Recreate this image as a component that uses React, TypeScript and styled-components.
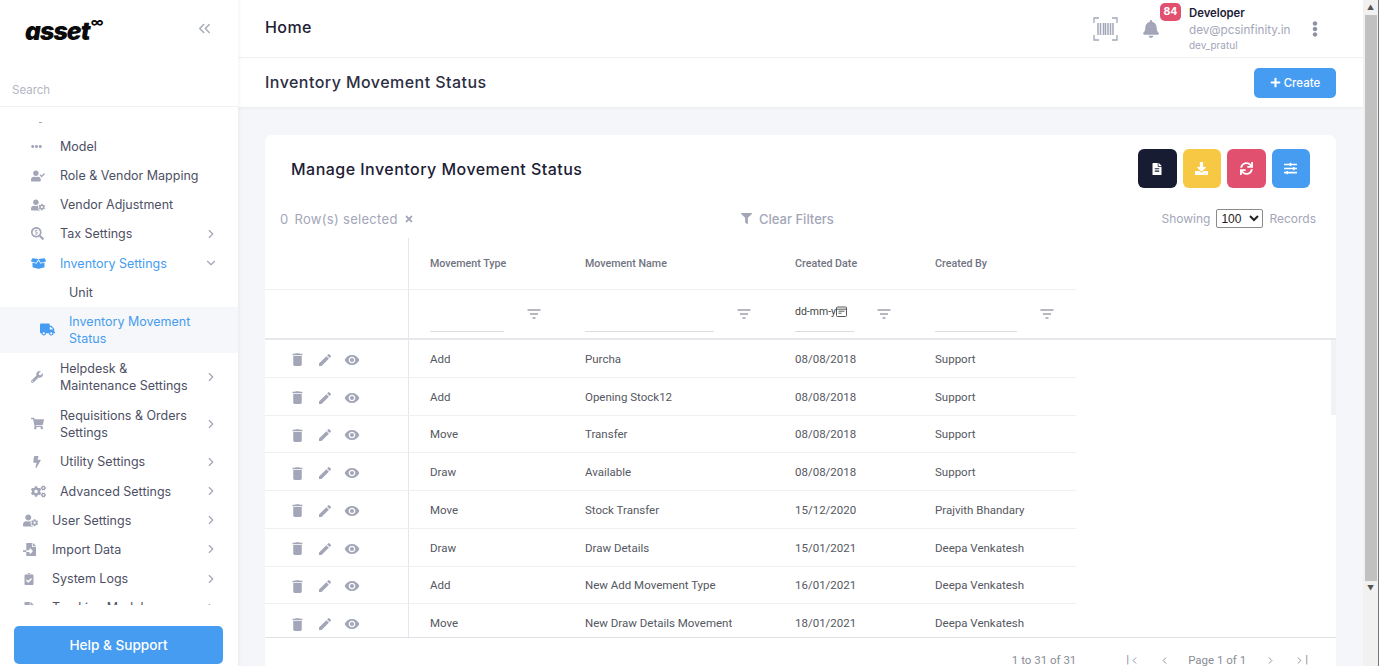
//libraries imports
import { FC, ReactNode } from "react";
import styled, { createGlobalStyle } from "styled-components";
import {
  FaBell,
  FaBolt,
  FaCogs,
  FaFileAlt,
  FaFileImport,
  FaFilter,
  FaShoppingCart,
  FaSlidersH,
  FaSync,
  FaTimes,
  FaTruck,
  FaUserCheck,
  FaUserCog,
  FaWrench,
  FaBoxOpen,
  FaClipboardCheck,
  FaSearchDollar,
  FaDownload,
  FaEllipsisH,
  FaEllipsisV,
  FaPlus,
} from "react-icons/fa";
import { MdDelete, MdEdit, MdVisibility } from "react-icons/md";
import { LuChevronRight, LuChevronDown, LuChevronLeft, LuChevronsLeft } from "react-icons/lu";

//types
type NavItem = {
  label: ReactNode;
  icon: ReactNode;
  level?: number;
  arrow?: "right" | "down";
  active?: boolean;
  tall?: boolean;
};

//data
const navItems: NavItem[] = [
  { label: "Model", icon: <FaEllipsisH size={11} />, level: 1 },
  { label: "Role & Vendor Mapping", icon: <FaUserCheck size={14} />, level: 1 },
  { label: "Vendor Adjustment", icon: <FaUserCog size={14} />, level: 1 },
  { label: "Tax Settings", icon: <FaSearchDollar size={13} />, level: 1, arrow: "right" },
  { label: "Inventory Settings", icon: <FaBoxOpen size={15} />, level: 1, arrow: "down", active: true },
];

const navItemsAfter: NavItem[] = [
  { label: <>Helpdesk &amp;<br />Maintenance Settings</>, icon: <FaWrench size={12} />, level: 1, arrow: "right", tall: true },
  { label: <>Requisitions &amp; Orders<br />Settings</>, icon: <FaShoppingCart size={13} />, level: 1, arrow: "right", tall: true },
  { label: "Utility Settings", icon: <FaBolt size={12} />, level: 1, arrow: "right" },
  { label: "Advanced Settings", icon: <FaCogs size={15} />, level: 1, arrow: "right" },
  { label: "User Settings", icon: <FaUserCog size={15} />, level: 0, arrow: "right" },
  { label: "Import Data", icon: <FaFileImport size={13} />, level: 0, arrow: "right" },
  { label: "System Logs", icon: <FaClipboardCheck size={12} />, level: 0, arrow: "right" },
  { label: "Tracking Module", icon: <FaFileAlt size={12} />, level: 0, arrow: "right" },
];

const rows = [
  ["Add", "Purcha", "08/08/2018", "Support"],
  ["Add", "Opening Stock12", "08/08/2018", "Support"],
  ["Move", "Transfer", "08/08/2018", "Support"],
  ["Draw", "Available", "08/08/2018", "Support"],
  ["Move", "Stock Transfer", "15/12/2020", "Prajvith Bhandary"],
  ["Draw", "Draw Details", "15/01/2021", "Deepa Venkatesh"],
  ["Add", "New Add Movement Type", "16/01/2021", "Deepa Venkatesh"],
  ["Move", "New Draw Details Movement", "18/01/2021", "Deepa Venkatesh"],
];

const columns = [
  { title: "Movement Type", width: 155, input: 74 },
  { title: "Movement Name", width: 210, input: 129 },
  { title: "Created Date", width: 140, input: 59 },
  { title: "Created By", width: 142, input: 82 },
];

const FilterLines: FC = () => (
  <svg width="14" height="10" viewBox="0 0 14 10" fill="none" stroke="#6f7280" strokeWidth="1">
    <path d="M0.5 1h13M3 5h8M5.5 9h3" />
  </svg>
);

const BarcodeIcon: FC = () => (
  <svg width="25" height="24" viewBox="0 0 25 24" fill="none" stroke="#a3a6b8" strokeWidth="1.3">
    <path d="M6 1H1v5M19 1h5v5M6 23H1v-5M19 23h5v-5" />
    <path d="M5 6v12M7.5 6v12M10.5 6v12M12.5 6v12M15 6v12M17.5 6v12M20 6v12" strokeWidth="1.5" />
  </svg>
);

const CalendarGlyph: FC = () => (
  <svg width="11" height="11" viewBox="0 0 11 11" fill="none" stroke="#444" strokeWidth="0.9">
    <rect x="0.5" y="1" width="10" height="9.5" rx="1" />
    <path d="M0.5 3.2h10M2.5 5.2h6M2.5 7.2h3" />
  </svg>
);

const NavRow: FC<NavItem> = ({ label, icon, level = 0, arrow, active, tall }) => (
  <NavLine $level={level} $active={active} $tall={tall}>
    <NavIcon $active={active}>{icon}</NavIcon>
    <NavText>{label}</NavText>
    {arrow === "right" && <NavArrow><LuChevronRight size={14} /></NavArrow>}
    {arrow === "down" && <NavArrow><LuChevronDown size={14} /></NavArrow>}
  </NavLine>
);

const App: FC = () => {
  return (
    <>
      <GlobalStyle />
      <Page>
        <Sidebar>
          <LogoRow>
            <Logo>
              asset<sup>∞</sup>
            </Logo>
            <Collapse>
              <LuChevronsLeft size={19} />
            </Collapse>
          </LogoRow>
          <SearchRow>Search</SearchRow>
          <NavScroll>
            <NavStub />
            {navItems.map((item, i) => (
              <NavRow key={i} {...item} />
            ))}
            <SubLine>Unit</SubLine>
            <ActiveLine>
              <ActiveIcon>
                <FaTruck size={15} />
              </ActiveIcon>
              <span>
                Inventory Movement
                <br />
                Status
              </span>
            </ActiveLine>
            {navItemsAfter.map((item, i) => (
              <NavRow key={i} {...item} />
            ))}
          </NavScroll>
          <HelpWrap>
            <HelpButton>Help &amp; Support</HelpButton>
          </HelpWrap>
        </Sidebar>

        <Main>
          <TopBar>
            <PageTitle>Home</PageTitle>
            <TopActions>
              <BarcodeIcon />
              <BellWrap>
                <FaBell size={18} />
                <Badge>84</Badge>
              </BellWrap>
              <UserBlock>
                <UserName>Developer</UserName>
                <UserMail>dev@pcsinfinity.in</UserMail>
                <UserId>dev_pratul</UserId>
              </UserBlock>
              <MoreButton>
                <FaEllipsisV size={16} />
              </MoreButton>
            </TopActions>
          </TopBar>
          <SubBar>
            <SubTitle>Inventory Movement Status</SubTitle>
            <CreateButton>
              <FaPlus size={11} /> Create
            </CreateButton>
          </SubBar>

          <Content>
            <Card>
              <CardHead>
                <CardTitle>Manage Inventory Movement Status</CardTitle>
                <ToolButtons>
                  <ToolButton $color="#171c33"><FaFileAlt size={12} /></ToolButton>
                  <ToolButton $color="#f6c844"><FaDownload size={13} /></ToolButton>
                  <ToolButton $color="#e2506f"><FaSync size={13} /></ToolButton>
                  <ToolButton $color="#469cf0"><FaSlidersH size={13} /></ToolButton>
                </ToolButtons>
              </CardHead>

              <InfoRow>
                <Selected>
                  <b>0</b> Row(s) selected <FaTimes size={10} />
                </Selected>
                <ClearFilters>
                  <FaFilter size={11} /> Clear Filters
                </ClearFilters>
                <Showing>
                  Showing
                  <RecordSelect defaultValue="100">
                    <option value="100">100</option>
                  </RecordSelect>
                  Records
                </Showing>
              </InfoRow>

              <Grid>
                <GridBody>
                  <HeadRow>
                    <ActionCell />
                    {columns.map((c) => (
                      <HeadCell key={c.title} style={{ width: c.width }}>
                        {c.title}
                      </HeadCell>
                    ))}
                  </HeadRow>
                  <FilterRow>
                    <ActionCell />
                    {columns.map((c) => (
                      <FilterCell key={c.title} style={{ width: c.width }}>
                        <FilterInput style={{ width: c.input }}>
                          {c.title === "Created Date" && (
                            <DateHint>
                              dd-mm-y
                              <CalendarGlyph />
                            </DateHint>
                          )}
                        </FilterInput>
                        <FilterGlyph>
                          <FilterLines />
                        </FilterGlyph>
                      </FilterCell>
                    ))}
                  </FilterRow>
                  {rows.map((r, i) => (
                    <DataRow key={i}>
                      <ActionCell>
                        <ActionIcon><MdDelete size={17} /></ActionIcon>
                        <ActionIcon><MdEdit size={16} /></ActionIcon>
                        <ActionIcon><MdVisibility size={16} /></ActionIcon>
                      </ActionCell>
                      {r.map((v, j) => (
                        <DataCell key={j} style={{ width: columns[j].width }}>
                          {v}
                        </DataCell>
                      ))}
                    </DataRow>
                  ))}
                </GridBody>
                <GridThumb />
              </Grid>

              <Pager>
                <span>1 to 31 of 31</span>
                <PagerNav>
                  <PagerIcon>|<LuChevronLeft size={11} /></PagerIcon>
                  <PagerIcon><LuChevronLeft size={11} /></PagerIcon>
                  <span>Page 1 of 1</span>
                  <PagerIcon><LuChevronRight size={11} /></PagerIcon>
                  <PagerIcon><LuChevronRight size={11} />|</PagerIcon>
                </PagerNav>
              </Pager>
            </Card>
          </Content>
        </Main>

        <PageScroll>
          <ScrollArrow>▲</ScrollArrow>
          <ScrollThumb />
          <ScrollArrow>▼</ScrollArrow>
        </PageScroll>
      </Page>
    </>
  );
};

const GlobalStyle = createGlobalStyle`
  html, body {
    margin: 0;
    height: 666px;
    overflow: hidden;
    font-family: "Inter", "Liberation Sans", sans-serif;
    background: #f4f6f9;
  }
  * { box-sizing: border-box; }
`;

const Page = styled.div`
  display: flex;
  width: 1379px;
  height: 666px;
  overflow: hidden;
`;

const Sidebar = styled.aside`
  width: 238px;
  flex: none;
  display: flex;
  flex-direction: column;
  background: #fff;
  box-shadow: 1px 0 4px rgba(30, 40, 70, 0.06);
  z-index: 2;
`;

const LogoRow = styled.div`
  height: 57px;
  padding: 0 24px 0 25px;
  display: flex;
  align-items: center;
  justify-content: space-between;
`;

const Logo = styled.div`
  font-family: "Inter", sans-serif;
  font-weight: 900;
  font-style: italic;
  font-size: 24.5px;
  letter-spacing: -0.9px;
  color: #0a0a0a;
  line-height: 1;
  margin-top: 6px;
  sup {
    font-size: 13px;
    font-style: normal;
    font-weight: 700;
    line-height: 0;
    vertical-align: 13px;
    margin-left: 1px;
  }
`;

const Collapse = styled.div`
  color: #a9acbc;
  display: flex;
`;

const SearchRow = styled.div`
  height: 50px;
  padding: 26px 12px 0;
  font-size: 11.5px;
  color: #b4b6c4;
  border-bottom: 1px solid #eff0f4;
`;

const NavScroll = styled.nav`
  height: 498px;
  overflow: hidden;
  flex: none;
`;

const NavStub = styled.div`
  height: 24.8px;
  padding: 15px 0 0 39px;
  &::before {
    content: "";
    display: block;
    width: 3px;
    height: 1px;
    background: #a3a6b8;
  }
`;

const NavLine = styled.div<{ $level: number; $active?: boolean; $tall?: boolean }>`
  display: flex;
  align-items: center;
  height: ${(p) => (p.$tall ? "47px" : "29.2px")};
  padding-left: ${(p) => (p.$level === 1 ? "31px" : "23px")};
  padding-right: 20px;
  color: ${(p) => (p.$active ? "#469cf0" : "#4d5064")};
  font-size: 12.5px;
  line-height: 17px;
`;

const NavIcon = styled.span<{ $active?: boolean }>`
  width: 29px;
  flex: none;
  display: flex;
  align-items: center;
  color: ${(p) => (p.$active ? "#469cf0" : "#a3a6b8")};
`;

const NavText = styled.span`
  flex: 1;
  white-space: nowrap;
`;

const NavArrow = styled.span`
  display: flex;
  color: #a3a6b8;
`;

const SubLine = styled.div`
  height: 29px;
  padding-left: 69px;
  display: flex;
  align-items: center;
  font-size: 12.5px;
  color: #4d5064;
`;

const ActiveLine = styled.div`
  height: 46.5px;
  background: #f5f7fa;
  display: flex;
  align-items: center;
  padding-left: 40px;
  color: #469cf0;
  font-size: 12.5px;
  line-height: 17px;
`;

const ActiveIcon = styled.span`
  width: 29px;
  display: flex;
`;

const HelpWrap = styled.div`
  padding: 21px 15px 2px 14px;
`;

const HelpButton = styled.button`
  width: 100%;
  height: 38px;
  border: 0;
  border-radius: 5px;
  background: #469cf0;
  color: #fff;
  font-family: inherit;
  font-size: 13.6px;
  font-weight: 500;
`;

const Main = styled.main`
  flex: 1;
  min-width: 0;
  display: flex;
  flex-direction: column;
`;

const TopBar = styled.header`
  height: 58px;
  flex: none;
  background: #fff;
  border-bottom: 1px solid #f1f2f5;
  display: flex;
  align-items: center;
  justify-content: space-between;
  padding: 0 40px 0 27px;
`;

const PageTitle = styled.h1`
  margin: 0 0 3px;
  font-size: 16px;
  font-weight: 500;
  letter-spacing: 0.4px;
  color: #1c2035;
`;

const TopActions = styled.div`
  display: flex;
  align-items: center;
`;

const BellWrap = styled.div`
  position: relative;
  color: #a3a6b8;
  margin: 0 0 0 24px;
  display: flex;
`;

const Badge = styled.span`
  position: absolute;
  top: -17px;
  left: 18px;
  width: 21px;
  height: 18px;
  border-radius: 5px;
  background: #e2506f;
  color: #fff;
  font-size: 10.5px;
  font-weight: 700;
  line-height: 18px;
  text-align: center;
`;

const UserBlock = styled.div`
  margin-left: 29px;
  display: flex;
  flex-direction: column;
  width: 103px;
`;

const UserName = styled.span`
  font-size: 11.3px;
  font-weight: 600;
  color: #1c2035;
  line-height: 15px;
`;

const UserMail = styled.span`
  font-size: 11.7px;
  color: #a3a6b8;
  line-height: 18px;
`;

const UserId = styled.span`
  font-size: 10px;
  color: #a3a6b8;
  line-height: 12px;
`;

const MoreButton = styled.div`
  color: #8f92a3;
  display: flex;
  margin-left: 15px;
`;

const SubBar = styled.div`
  height: 49px;
  flex: none;
  background: #fff;
  display: flex;
  align-items: center;
  justify-content: space-between;
  padding: 0 27px;
  box-shadow: 0 1px 3px rgba(30, 40, 70, 0.05);
`;

const SubTitle = styled.h2`
  margin: 0 0 2px;
  font-size: 16px;
  font-weight: 500;
  letter-spacing: 0.45px;
  color: #2c2f42;
`;

const CreateButton = styled.button`
  width: 82px;
  height: 30px;
  border: 0;
  border-radius: 5px;
  background: #469cf0;
  color: #fff;
  font-family: inherit;
  font-size: 11.5px;
  font-weight: 500;
  display: flex;
  align-items: center;
  justify-content: center;
  gap: 3px;
`;

const Content = styled.div`
  flex: 1;
  min-height: 0;
  padding: 28px 27px 0;
`;

const Card = styled.section`
  background: #fff;
  border-radius: 7px 7px 0 0;
  height: 100%;
  display: flex;
  flex-direction: column;
`;

const CardHead = styled.div`
  height: 69px;
  flex: none;
  padding: 14px 26px 0 26px;
  display: flex;
  justify-content: space-between;
`;

const CardTitle = styled.h3`
  margin: 10px 0 0;
  font-size: 16px;
  font-weight: 500;
  letter-spacing: 0.47px;
  color: #1c2035;
`;

const ToolButtons = styled.div`
  display: flex;
  gap: 6px;
`;

const ToolButton = styled.button<{ $color: string }>`
  width: 38.5px;
  height: 39px;
  border: 0;
  border-radius: 6px;
  background: ${(p) => p.$color};
  color: #fff;
  display: flex;
  align-items: center;
  justify-content: center;
`;

const InfoRow = styled.div`
  height: 34px;
  flex: none;
  padding: 0 20px 5px 15px;
  display: grid;
  grid-template-columns: 461px 1fr auto;
  align-items: center;
  font-size: 12px;
  color: #a3a6b8;
`;

const Selected = styled.div`
  display: flex;
  align-items: center;
  gap: 5px;
  font-size: 13px;
  letter-spacing: 0.3px;
  b {
    font-weight: 400;
    margin-right: 1px;
  }
  svg {
    margin-left: 1px;
  }
`;

const ClearFilters = styled.div`
  display: flex;
  align-items: center;
  gap: 7px;
  font-size: 13px;
  font-weight: 500;
`;

const Showing = styled.div`
  display: flex;
  align-items: center;
  gap: 6px;
  font-size: 12px;
`;

const RecordSelect = styled.select`
  width: 47px;
  height: 19px;
  font-size: 12px;
  font-family: "Liberation Sans", sans-serif;
  color: #222;
  background: #fff;
  border: 1px solid #8a8a8a;
  border-radius: 2px;
`;

const Grid = styled.div`
  flex: 1;
  min-height: 0;
  position: relative;
  overflow: hidden;
  border-bottom: 1px solid #dfe1e6;
`;

const GridBody = styled.div`
  width: 811px;
`;

const GridThumb = styled.div`
  position: absolute;
  top: 102px;
  right: 0;
  width: 5px;
  height: 75px;
  background: #f1f2f4;
`;

const TableRow = styled.div`
  display: flex;
  border-bottom: 1px solid #eef0f2;
  font-family: "Roboto", sans-serif;
`;

const HeadRow = styled(TableRow)`
  height: 52px;
`;

const FilterRow = styled(TableRow)`
  height: 50px;
  width: 1071px;
  border-bottom: 2px solid #e6e7ea;
`;

const DataRow = styled(TableRow)`
  height: 37.75px;
`;

const ActionCell = styled.div`
  width: 144px;
  flex: none;
  border-right: 1px solid #e6e7ea;
  display: flex;
  align-items: center;
  padding: 3px 0 0 18.5px;
  color: #a3a6b8;
`;

const ActionIcon = styled.span`
  width: 27.5px;
  display: flex;
  justify-content: center;
`;

const HeadCell = styled.div`
  flex: none;
  padding-left: 21px;
  display: flex;
  align-items: center;
  font-size: 10.7px;
  font-weight: 500;
  color: #71747f;
`;

const FilterCell = styled.div`
  flex: none;
  padding: 0 0 0 21px;
  display: flex;
  align-items: flex-end;
`;

const FilterInput = styled.div`
  height: 28px;
  margin-bottom: 6px;
  border-bottom: 1px solid #dcdde1;
`;

const DateHint = styled.span`
  display: flex;
  align-items: center;
  font-size: 10.5px;
  color: #444;
  height: 14px;
  white-space: nowrap;
  overflow: hidden;
`;

const FilterGlyph = styled.span`
  margin: 0 0 19px 23px;
  display: flex;
`;

const DataCell = styled.div`
  flex: none;
  padding: 1px 0 0 21px;
  display: flex;
  align-items: center;
  font-size: 11.5px;
  color: #55585f;
`;

const Pager = styled.div`
  height: 28px;
  flex: none;
  display: flex;
  justify-content: flex-end;
  padding: 16px 28px 0 0;
  font-family: "Roboto", sans-serif;
  font-size: 11.5px;
  line-height: 13px;
  color: #8a8d96;
  gap: 50px;
`;

const PagerNav = styled.div`
  display: flex;
  align-items: center;
  gap: 18px;
`;

const PagerIcon = styled.span`
  display: inline-flex;
  align-items: center;
  min-width: 12px;
  justify-content: center;
  line-height: 1;
`;

const PageScroll = styled.div`
  width: 16px;
  flex: none;
  height: 666px;
  background: #f1f1f1;
  border-right: 1px solid #777;
  display: flex;
  flex-direction: column;
  z-index: 3;
`;

const ScrollArrow = styled.span`
  height: 15px;
  flex: none;
  font-size: 7px;
  color: #555;
  text-align: center;
  line-height: 15px;
`;

const ScrollThumb = styled.span`
  height: 566px;
  width: 12px;
  margin-left: 2px;
  flex: none;
  background: #c1c1c1;
`;

export default App;
